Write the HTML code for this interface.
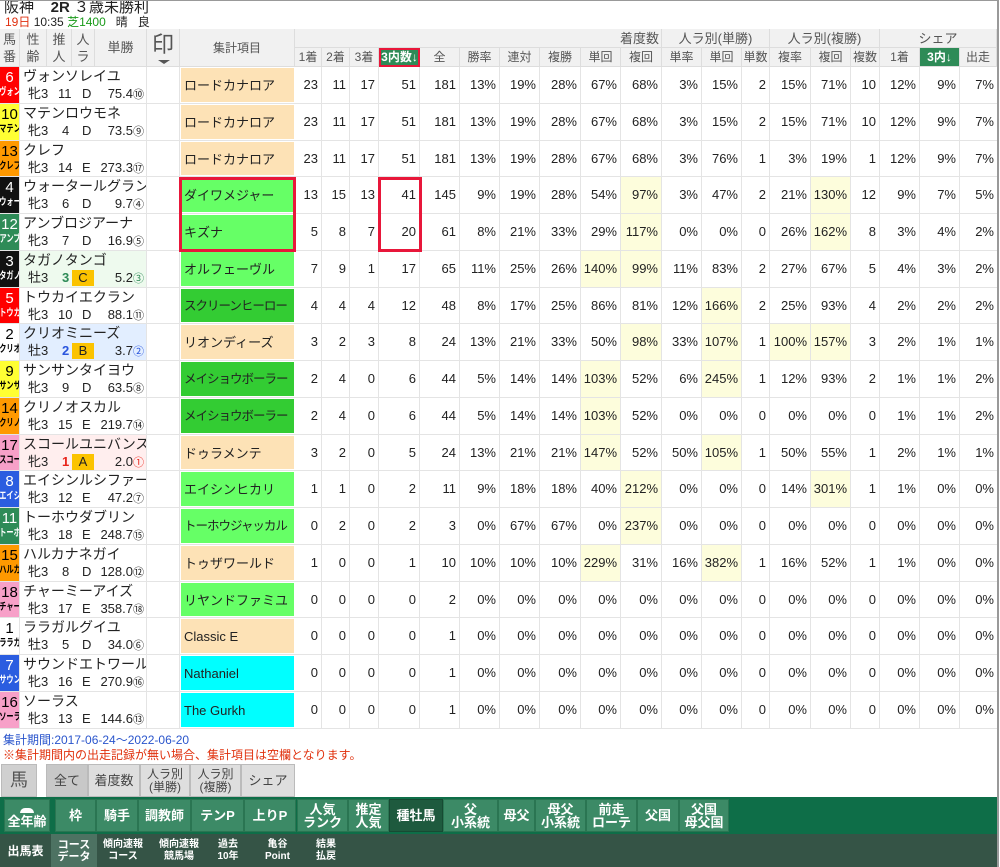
<!DOCTYPE html>
<html><head><meta charset="utf-8">
<style>
*{box-sizing:border-box;margin:0;padding:0}
body{width:1000px;height:867px;overflow:hidden;background:#fff;font-family:"Liberation Sans","Noto Sans CJK JP",sans-serif;color:#222;position:relative}
.frame{position:absolute;left:0;top:0;width:999px;height:867px;border-top:1px solid #999;border-right:2px solid #999;pointer-events:none}
.t1{position:absolute;left:4px;top:0px;font-size:15px;line-height:16px}
.t2{position:absolute;left:5px;top:16px;font-size:12px;line-height:13px}
.hd{position:absolute;background:#f1f1f1;color:#555;font-size:12px;text-align:center;border-right:1px solid #ddd;border-bottom:1px solid #ddd}
.rows{position:absolute;left:0;top:67px;width:997px}
.r{display:flex;height:36.78px;border-bottom:1px solid #e4e4e4}
.r>div{border-right:1px solid #e4e4e4;height:100%;font-size:13px;line-height:35px;text-align:right;padding-right:3px;white-space:nowrap;overflow:hidden}
.r>div:nth-child(1){width:20px;padding:0;text-align:center;line-height:normal}
.r>div:nth-child(2){width:127px;position:relative;padding:0;text-align:left}
.r>div:nth-child(3){width:33px}
.r>div:nth-child(4){width:115px;text-align:left;padding-left:3px;border:1px solid #fff;font-size:13px}
.r>div:nth-child(5){width:27px}.r>div:nth-child(6){width:28px}.r>div:nth-child(7){width:29px}.r>div:nth-child(8){width:41px}
.r>div:nth-child(9){width:40px}.r>div:nth-child(10){width:40px}.r>div:nth-child(11){width:40px}.r>div:nth-child(12){width:41px}
.r>div:nth-child(13){width:40px}.r>div:nth-child(14){width:41px}.r>div:nth-child(15){width:40px}.r>div:nth-child(16){width:40px}
.r>div:nth-child(17){width:28px}.r>div:nth-child(18){width:41px}.r>div:nth-child(19){width:40px}.r>div:nth-child(20){width:29px}
.r>div:nth-child(21){width:40px}.r>div:nth-child(22){width:40px}.r>div:nth-child(23){width:37px;border-right:none}
.n b{display:block;font-size:15px;font-weight:normal;line-height:17px;margin-top:2px}
.n i{display:block;font-style:normal;font-weight:bold;font-size:10px;line-height:13px;transform:scaleX(.72);white-space:nowrap;margin-left:-6px;width:32px}
.g1{background:#fff;color:#000}.g2{background:#111;color:#fff}.g3{background:#f00;color:#fff}.g4{background:#2b5de0;color:#fff}
.g5{background:#ff3;color:#000}.g6{background:#2e8b57;color:#fff}.g7{background:#f90;color:#000}.g8{background:#f7a0c8;color:#000}
.nm{position:absolute;left:3px;top:1px;font-size:14px;line-height:17px}
.d{position:absolute;top:18px;font-size:13px;line-height:17px}
.mk{position:absolute;left:52px;top:19px;width:22px;height:16px;background:#fbc300;text-align:center;font-size:13px;line-height:16px}
.o{position:absolute;right:2px;top:18px;font-size:13px;line-height:17px}
.o small{font-size:11px}
.pe{background:#fde2b6}.lg{background:#66ff66}.dg{background:#33cc33}.cy{background:#00ffff}
.lng{letter-spacing:-1px;font-size:12.5px!important}
.y{background:#fdfddc}
.red{position:absolute;border:3px solid #e8173a}
.note1{position:absolute;left:3px;top:731px;font-size:12px;color:#2a55cc}
.note2{position:absolute;left:3px;top:746px;font-size:12px;color:#e0300c}
.tab{position:absolute;top:764px;height:33px;background:#dedede;border:1px solid #bbb;color:#444;font-size:12px;text-align:center;display:flex;align-items:center;justify-content:center;line-height:13px}
.gb{position:absolute;left:0;top:797px;width:998px;height:37px;background:#0e6e48}
.b{position:absolute;top:799px;height:33px;background:#3c8a66;border:1px solid #2a7552;color:#fff;font-weight:bold;font-size:13px;display:flex;align-items:center;justify-content:center;text-align:center;line-height:13px}
.db{position:absolute;left:0;top:834px;width:998px;height:33px;background:#355446}
.s{position:absolute;top:834px;height:33px;color:#fff;font-size:11px;font-weight:bold;display:flex;align-items:center;justify-content:center;text-align:center;line-height:12px}
</style></head><body>
<div class="t1">阪神&nbsp;&nbsp;&nbsp;&nbsp;<b>2R</b>&nbsp;３歳未勝利</div>
<div class="t2"><span style="color:#e03010">19日</span>&nbsp;10:35&nbsp;<span style="color:#1a9a1a">芝1400</span>&nbsp;&nbsp;&nbsp;晴&nbsp;&nbsp;&nbsp;良</div>

<div class="hd" style="left:0;top:29px;width:20px;height:38px;font-size:13px;line-height:17px;padding-top:2px">馬<br>番</div>
<div class="hd" style="left:20px;top:29px;width:27px;height:38px;font-size:13px;line-height:17px;padding-top:2px">性<br>齢</div>
<div class="hd" style="left:47px;top:29px;width:25px;height:38px;font-size:13px;line-height:17px;padding-top:2px">推<br>人</div>
<div class="hd" style="left:72px;top:29px;width:23px;height:38px;font-size:13px;line-height:17px;padding-top:2px">人<br>ラ</div>
<div class="hd" style="left:95px;top:29px;width:52px;height:38px;font-size:13px;line-height:38px">単勝</div>
<div class="hd" style="left:147px;top:29px;width:33px;height:38px;font-size:22px;line-height:32px;color:#555">印<div style="position:absolute;left:11px;top:31px;width:0;height:0;border-left:6px solid transparent;border-right:6px solid transparent;border-top:4px solid #555"></div></div>
<div class="hd" style="left:180px;top:29px;width:115px;height:38px;line-height:38px">集計項目</div>
<div class="hd" style="left:295px;top:29px;width:367px;height:19px;text-align:right;padding-right:2px;line-height:19px;font-size:13px">着度数</div>
<div class="hd" style="left:662px;top:29px;width:108px;height:19px;line-height:19px;font-size:13px">人ラ別(単勝)</div>
<div class="hd" style="left:770px;top:29px;width:110px;height:19px;line-height:19px;font-size:13px">人ラ別(複勝)</div>
<div class="hd" style="left:880px;top:29px;width:117px;height:19px;line-height:19px;font-size:13px">シェア</div>
<div class="hd" style="left:295px;top:48px;width:27px;height:19px;line-height:19px">1着</div>
<div class="hd" style="left:322px;top:48px;width:28px;height:19px;line-height:19px">2着</div>
<div class="hd" style="left:350px;top:48px;width:29px;height:19px;line-height:19px">3着</div>
<div class="hd" style="left:379px;top:48px;width:41px;height:19px;line-height:15px;background:#2e8b57;color:#fff;font-weight:bold;border:2px solid #e8173a">3内数↓</div>
<div class="hd" style="left:420px;top:48px;width:40px;height:19px;line-height:19px">全</div>
<div class="hd" style="left:460px;top:48px;width:40px;height:19px;line-height:19px">勝率</div>
<div class="hd" style="left:500px;top:48px;width:40px;height:19px;line-height:19px">連対</div>
<div class="hd" style="left:540px;top:48px;width:41px;height:19px;line-height:19px">複勝</div>
<div class="hd" style="left:581px;top:48px;width:40px;height:19px;line-height:19px">単回</div>
<div class="hd" style="left:621px;top:48px;width:41px;height:19px;line-height:19px">複回</div>
<div class="hd" style="left:662px;top:48px;width:40px;height:19px;line-height:19px">単率</div>
<div class="hd" style="left:702px;top:48px;width:40px;height:19px;line-height:19px">単回</div>
<div class="hd" style="left:742px;top:48px;width:28px;height:19px;line-height:19px">単数</div>
<div class="hd" style="left:770px;top:48px;width:41px;height:19px;line-height:19px">複率</div>
<div class="hd" style="left:811px;top:48px;width:40px;height:19px;line-height:19px">複回</div>
<div class="hd" style="left:851px;top:48px;width:29px;height:19px;line-height:19px">複数</div>
<div class="hd" style="left:880px;top:48px;width:40px;height:19px;line-height:19px">1着</div>
<div class="hd" style="left:920px;top:48px;width:40px;height:19px;line-height:19px;background:#2e8b57;color:#fff;font-weight:bold">3内↓</div>
<div class="hd" style="left:960px;top:48px;width:37px;height:19px;line-height:19px">出走</div>

<div class="rows">
<div class="r"><div class="n g3"><b>6</b><i>ヴォン</i></div><div><span class="nm">ヴォンソレイユ</span><span class="d" style="left:8px">牝3</span><span class="d" style="left:38px">11</span><span class="d" style="left:62px">D</span><span class="o">75.4<small>⑩</small></span></div><div></div><div class="pe">ロードカナロア</div><div>23</div><div>11</div><div>17</div><div>51</div><div>181</div><div>13%</div><div>19%</div><div>28%</div><div>67%</div><div>68%</div><div>3%</div><div>15%</div><div>2</div><div>15%</div><div>71%</div><div>10</div><div>12%</div><div>9%</div><div>7%</div></div>
<div class="r"><div class="n g5"><b>10</b><i>マテン</i></div><div><span class="nm">マテンロウモネ</span><span class="d" style="left:8px">牝3</span><span class="d" style="left:42px">4</span><span class="d" style="left:62px">D</span><span class="o">73.5<small>⑨</small></span></div><div></div><div class="pe">ロードカナロア</div><div>23</div><div>11</div><div>17</div><div>51</div><div>181</div><div>13%</div><div>19%</div><div>28%</div><div>67%</div><div>68%</div><div>3%</div><div>15%</div><div>2</div><div>15%</div><div>71%</div><div>10</div><div>12%</div><div>9%</div><div>7%</div></div>
<div class="r"><div class="n g7"><b>13</b><i>クレフ</i></div><div><span class="nm">クレフ</span><span class="d" style="left:8px">牝3</span><span class="d" style="left:38px">14</span><span class="d" style="left:62px">E</span><span class="o">273.3<small>⑰</small></span></div><div></div><div class="pe">ロードカナロア</div><div>23</div><div>11</div><div>17</div><div>51</div><div>181</div><div>13%</div><div>19%</div><div>28%</div><div>67%</div><div>68%</div><div>3%</div><div>76%</div><div>1</div><div>3%</div><div>19%</div><div>1</div><div>12%</div><div>9%</div><div>7%</div></div>
<div class="r"><div class="n g2"><b>4</b><i>ウォー</i></div><div><span class="nm">ウォータールグラン</span><span class="d" style="left:8px">牝3</span><span class="d" style="left:42px">6</span><span class="d" style="left:62px">D</span><span class="o">9.7<small>④</small></span></div><div></div><div class="lg">ダイワメジャー</div><div>13</div><div>15</div><div>13</div><div>41</div><div>145</div><div>9%</div><div>19%</div><div>28%</div><div>54%</div><div class="y">97%</div><div>3%</div><div>47%</div><div>2</div><div>21%</div><div class="y">130%</div><div>12</div><div>9%</div><div>7%</div><div>5%</div></div>
<div class="r"><div class="n g6"><b>12</b><i>アンブ</i></div><div><span class="nm">アンブロジアーナ</span><span class="d" style="left:8px">牝3</span><span class="d" style="left:42px">7</span><span class="d" style="left:62px">D</span><span class="o">16.9<small>⑤</small></span></div><div></div><div class="lg">キズナ</div><div>5</div><div>8</div><div>7</div><div>20</div><div>61</div><div>8%</div><div>21%</div><div>33%</div><div>29%</div><div class="y">117%</div><div>0%</div><div>0%</div><div>0</div><div>26%</div><div class="y">162%</div><div>8</div><div>3%</div><div>4%</div><div>2%</div></div>
<div class="r"><div class="n g2"><b>3</b><i>タガノ</i></div><div style="background:#eefaee"><span class="nm">タガノタンゴ</span><span class="d" style="left:8px">牡3</span><span class="d" style="left:42px;color:#2e8b57;font-weight:bold">3</span><span class="mk">C</span><span class="o">5.2<small style="color:#2e8b57">③</small></span></div><div></div><div class="lg">オルフェーヴル</div><div>7</div><div>9</div><div>1</div><div>17</div><div>65</div><div>11%</div><div>25%</div><div>26%</div><div class="y">140%</div><div class="y">99%</div><div>11%</div><div>83%</div><div>2</div><div>27%</div><div>67%</div><div>5</div><div>4%</div><div>3%</div><div>2%</div></div>
<div class="r"><div class="n g3"><b>5</b><i>トウカ</i></div><div><span class="nm">トウカイエクラン</span><span class="d" style="left:8px">牝3</span><span class="d" style="left:38px">10</span><span class="d" style="left:62px">D</span><span class="o">88.1<small>⑪</small></span></div><div></div><div class="dg lng">スクリーンヒーロー</div><div>4</div><div>4</div><div>4</div><div>12</div><div>48</div><div>8%</div><div>17%</div><div>25%</div><div>86%</div><div>81%</div><div>12%</div><div class="y">166%</div><div>2</div><div>25%</div><div>93%</div><div>4</div><div>2%</div><div>2%</div><div>2%</div></div>
<div class="r"><div class="n g1"><b>2</b><i>クリオ</i></div><div style="background:#e2eeff"><span class="nm">クリオミニーズ</span><span class="d" style="left:8px">牡3</span><span class="d" style="left:42px;color:#2a55dd;font-weight:bold">2</span><span class="mk">B</span><span class="o">3.7<small style="color:#2a55dd">②</small></span></div><div></div><div class="pe">リオンディーズ</div><div>3</div><div>2</div><div>3</div><div>8</div><div>24</div><div>13%</div><div>21%</div><div>33%</div><div>50%</div><div class="y">98%</div><div>33%</div><div class="y">107%</div><div>1</div><div class="y">100%</div><div class="y">157%</div><div>3</div><div>2%</div><div>1%</div><div>1%</div></div>
<div class="r"><div class="n g5"><b>9</b><i>サンサ</i></div><div><span class="nm">サンサンタイヨウ</span><span class="d" style="left:8px">牝3</span><span class="d" style="left:42px">9</span><span class="d" style="left:62px">D</span><span class="o">63.5<small>⑧</small></span></div><div></div><div class="dg lng">メイショウボーラー</div><div>2</div><div>4</div><div>0</div><div>6</div><div>44</div><div>5%</div><div>14%</div><div>14%</div><div class="y">103%</div><div>52%</div><div>6%</div><div class="y">245%</div><div>1</div><div>12%</div><div>93%</div><div>2</div><div>1%</div><div>1%</div><div>2%</div></div>
<div class="r"><div class="n g7"><b>14</b><i>クリノ</i></div><div><span class="nm">クリノオスカル</span><span class="d" style="left:8px">牝3</span><span class="d" style="left:38px">15</span><span class="d" style="left:62px">E</span><span class="o">219.7<small>⑭</small></span></div><div></div><div class="dg lng">メイショウボーラー</div><div>2</div><div>4</div><div>0</div><div>6</div><div>44</div><div>5%</div><div>14%</div><div>14%</div><div class="y">103%</div><div>52%</div><div>0%</div><div>0%</div><div>0</div><div>0%</div><div>0%</div><div>0</div><div>1%</div><div>1%</div><div>2%</div></div>
<div class="r"><div class="n g8"><b>17</b><i>スコー</i></div><div style="background:#ffeeee"><span class="nm">スコールユニバンス</span><span class="d" style="left:8px">牝3</span><span class="d" style="left:42px;color:#e8231a;font-weight:bold">1</span><span class="mk">A</span><span class="o">2.0<small style="color:#e8231a">①</small></span></div><div></div><div class="pe">ドゥラメンテ</div><div>3</div><div>2</div><div>0</div><div>5</div><div>24</div><div>13%</div><div>21%</div><div>21%</div><div class="y">147%</div><div>52%</div><div>50%</div><div class="y">105%</div><div>1</div><div>50%</div><div>55%</div><div>1</div><div>2%</div><div>1%</div><div>1%</div></div>
<div class="r"><div class="n g4"><b>8</b><i>エイシ</i></div><div><span class="nm">エイシンルシファー</span><span class="d" style="left:8px">牝3</span><span class="d" style="left:38px">12</span><span class="d" style="left:62px">E</span><span class="o">47.2<small>⑦</small></span></div><div></div><div class="lg">エイシンヒカリ</div><div>1</div><div>1</div><div>0</div><div>2</div><div>11</div><div>9%</div><div>18%</div><div>18%</div><div>40%</div><div class="y">212%</div><div>0%</div><div>0%</div><div>0</div><div>14%</div><div class="y">301%</div><div>1</div><div>1%</div><div>0%</div><div>0%</div></div>
<div class="r"><div class="n g6"><b>11</b><i>トーホ</i></div><div><span class="nm">トーホウダブリン</span><span class="d" style="left:8px">牝3</span><span class="d" style="left:38px">18</span><span class="d" style="left:62px">E</span><span class="o">248.7<small>⑮</small></span></div><div></div><div class="lg lng">トーホウジャッカル</div><div>0</div><div>2</div><div>0</div><div>2</div><div>3</div><div>0%</div><div>67%</div><div>67%</div><div>0%</div><div class="y">237%</div><div>0%</div><div>0%</div><div>0</div><div>0%</div><div>0%</div><div>0</div><div>0%</div><div>0%</div><div>0%</div></div>
<div class="r"><div class="n g7"><b>15</b><i>ハルカ</i></div><div><span class="nm">ハルカナネガイ</span><span class="d" style="left:8px">牝3</span><span class="d" style="left:42px">8</span><span class="d" style="left:62px">D</span><span class="o">128.0<small>⑫</small></span></div><div></div><div class="pe">トゥザワールド</div><div>1</div><div>0</div><div>0</div><div>1</div><div>10</div><div>10%</div><div>10%</div><div>10%</div><div class="y">229%</div><div>31%</div><div>16%</div><div class="y">382%</div><div>1</div><div>16%</div><div>52%</div><div>1</div><div>1%</div><div>0%</div><div>0%</div></div>
<div class="r"><div class="n g8"><b>18</b><i>チャー</i></div><div><span class="nm">チャーミーアイズ</span><span class="d" style="left:8px">牝3</span><span class="d" style="left:38px">17</span><span class="d" style="left:62px">E</span><span class="o">358.7<small>⑱</small></span></div><div></div><div class="lg">リヤンドファミユ</div><div>0</div><div>0</div><div>0</div><div>0</div><div>2</div><div>0%</div><div>0%</div><div>0%</div><div>0%</div><div>0%</div><div>0%</div><div>0%</div><div>0</div><div>0%</div><div>0%</div><div>0</div><div>0%</div><div>0%</div><div>0%</div></div>
<div class="r"><div class="n g1"><b>1</b><i>ララガ</i></div><div><span class="nm">ララガルグイユ</span><span class="d" style="left:8px">牡3</span><span class="d" style="left:42px">5</span><span class="d" style="left:62px">D</span><span class="o">34.0<small>⑥</small></span></div><div></div><div class="pe">Classic E</div><div>0</div><div>0</div><div>0</div><div>0</div><div>1</div><div>0%</div><div>0%</div><div>0%</div><div>0%</div><div>0%</div><div>0%</div><div>0%</div><div>0</div><div>0%</div><div>0%</div><div>0</div><div>0%</div><div>0%</div><div>0%</div></div>
<div class="r"><div class="n g4"><b>7</b><i>サウン</i></div><div><span class="nm">サウンドエトワール</span><span class="d" style="left:8px">牝3</span><span class="d" style="left:38px">16</span><span class="d" style="left:62px">E</span><span class="o">270.9<small>⑯</small></span></div><div></div><div class="cy">Nathaniel</div><div>0</div><div>0</div><div>0</div><div>0</div><div>1</div><div>0%</div><div>0%</div><div>0%</div><div>0%</div><div>0%</div><div>0%</div><div>0%</div><div>0</div><div>0%</div><div>0%</div><div>0</div><div>0%</div><div>0%</div><div>0%</div></div>
<div class="r"><div class="n g8"><b>16</b><i>ソーラ</i></div><div><span class="nm">ソーラス</span><span class="d" style="left:8px">牝3</span><span class="d" style="left:38px">13</span><span class="d" style="left:62px">E</span><span class="o">144.6<small>⑬</small></span></div><div></div><div class="cy">The Gurkh</div><div>0</div><div>0</div><div>0</div><div>0</div><div>1</div><div>0%</div><div>0%</div><div>0%</div><div>0%</div><div>0%</div><div>0%</div><div>0%</div><div>0</div><div>0%</div><div>0%</div><div>0</div><div>0%</div><div>0%</div><div>0%</div></div>
</div>

<div class="red" style="left:179px;top:177px;width:117px;height:75px"></div>
<div class="red" style="left:378px;top:177px;width:44px;height:75px"></div>

<div class="note1">集計期間:2017-06-24〜2022-06-20</div>
<div class="note2">※集計期間内の出走記録が無い場合、集計項目は空欄となります。</div>

<div class="tab" style="left:1px;width:36px;font-size:18px;background:#d0d0d0;color:#555">馬</div>
<div class="tab" style="left:46px;width:42px;background:#c8c8c8;font-size:13px">全て</div>
<div class="tab" style="left:88px;width:52px;font-size:13px">着度数</div>
<div class="tab" style="left:140px;width:50px">人ラ別<br>(単勝)</div>
<div class="tab" style="left:190px;width:51px">人ラ別<br>(複勝)</div>
<div class="tab" style="left:241px;width:54px;font-size:13px">シェア</div>

<div class="gb"></div>
<div class="b" style="left:4px;width:46px;flex-direction:column;padding-top:4px"><span style="display:block;width:14px;height:5px;border-radius:7px 7px 0 0;background:#fff;margin-bottom:2px"></span>全年齢</div>
<div class="b" style="left:55px;width:41px">枠</div>
<div class="b" style="left:96px;width:42px">騎手</div>
<div class="b" style="left:138px;width:53px">調教師</div>
<div class="b" style="left:191px;width:53px">テンP</div>
<div class="b" style="left:244px;width:52px">上りP</div>
<div class="b" style="left:297px;width:51px">人気<br>ランク</div>
<div class="b" style="left:348px;width:41px">推定<br>人気</div>
<div class="b" style="left:389px;width:54px;background:#1e5a3e;border-color:#174a33">種牡馬</div>
<div class="b" style="left:443px;width:55px">父<br>小系統</div>
<div class="b" style="left:498px;width:37px">母父</div>
<div class="b" style="left:535px;width:51px">母父<br>小系統</div>
<div class="b" style="left:586px;width:51px">前走<br>ローテ</div>
<div class="b" style="left:637px;width:42px">父国</div>
<div class="b" style="left:679px;width:50px">父国<br>母父国</div>

<div class="db"></div>
<div class="s" style="left:0;width:51px;font-size:12px">出馬表</div>
<div class="s" style="left:51px;width:46px;background:#4d7262">コース<br>データ</div>
<div class="s" style="left:97px;width:52px;font-size:10px">傾向速報<br>コース</div>
<div class="s" style="left:152px;width:54px;font-size:10px">傾向速報<br>競馬場</div>
<div class="s" style="left:208px;width:40px;font-size:10px">過去<br>10年</div>
<div class="s" style="left:255px;width:45px;font-size:10px">亀谷<br>Point</div>
<div class="s" style="left:305px;width:42px;font-size:10px">結果<br>払戻</div>

<div class="frame"></div>
</body></html>
